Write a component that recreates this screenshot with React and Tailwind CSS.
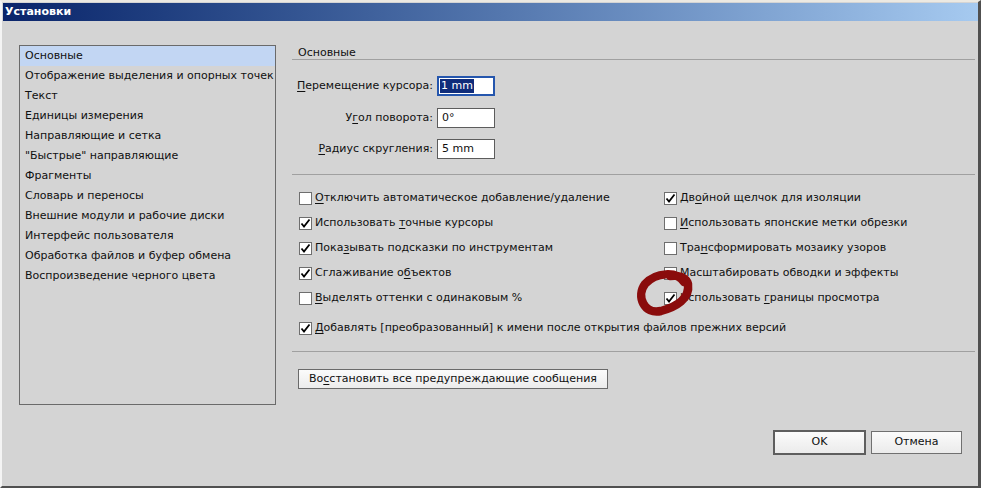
import React from "react";

const categories = [
  "Основные",
  "Отображение выделения и опорных точек",
  "Текст",
  "Единицы измерения",
  "Направляющие и сетка",
  "\"Быстрые\" направляющие",
  "Фрагменты",
  "Словарь и переносы",
  "Внешние модули и рабочие диски",
  "Интерфейс пользователя",
  "Обработка файлов и буфер обмена",
  "Воспроизведение черного цвета",
];

// label with one underlined mnemonic letter
function Mn({ text, at }) {
  return (
    <>
      {text.slice(0, at)}
      <span className="underline underline-offset-2">{text.slice(at, at + 1)}</span>
      {text.slice(at + 1)}
    </>
  );
}

function Check({ checked, text, at }) {
  return (
    <div className="h-[25px] flex items-center whitespace-nowrap">
      <span className="w-[13px] h-[13px] border border-[#6e6e6e] bg-white flex items-center justify-center shrink-0">
        {checked && (
          <svg width="11" height="11" viewBox="0 0 11 11">
            <path d="M1.5 5.5 L4 8.5 L9.5 1.5" fill="none" stroke="#000" strokeWidth="1.8" />
          </svg>
        )}
      </span>
      <span className="ml-[3px]">
        <Mn text={text} at={at} />
      </span>
    </div>
  );
}

function Field({ label, at, value, focused }) {
  return (
    <div className="flex items-center h-[20px]">
      <div className="w-[145px] pr-[4px] text-right whitespace-nowrap">
        <Mn text={label} at={at} />
      </div>
      {focused ? (
        <div className="w-[58px] h-[20px] border-[2px] border-[#2556ad] bg-white flex items-center pl-[1px]">
          <span className="bg-[#0f2c7a] text-white leading-[14px] px-[1px]">{value}</span>
        </div>
      ) : (
        <div className="w-[58px] h-[20px] border border-[#5c5c5c] bg-white flex items-center pl-[4px]">
          {value}
        </div>
      )}
    </div>
  );
}

export default function App() {
  return (
    <div className="relative w-[981px] h-[488px] bg-[#d4d4d4] border-t-[2px] border-t-[#ece9e2] border-l-[2px] border-l-[#f4f4f4] border-r-[3px] border-r-[#505050] border-b-[2px] border-b-[#505050] flex flex-col text-[11px] text-[#101010] font-['DejaVu_Sans',sans-serif] overflow-hidden">
      <div className="ml-[1px] mt-[1px] h-[18px] bg-linear-to-r from-[#0a246a] to-[#a6caf0] flex items-center pl-[2px]">
        <span className="text-white font-bold text-[11px]">Установки</span>
      </div>

      <div className="flex pt-[24px] pl-[17px]">
        <div className="w-[257px] h-[360px] border border-[#6a6a6a] shrink-0">
          {categories.map((c, i) => (
            <div
              key={c}
              className={
                "h-[20px] leading-[20px] pl-[5px] whitespace-nowrap " + (i === 0 ? "bg-[#c2d6f3]" : "")
              }
            >
              {c}
            </div>
          ))}
        </div>

        <div className="ml-[16px] flex-1 mr-[3px] flex flex-col">
          <div className="h-[15px] leading-[15px] pl-[6px] border-b border-b-[#a0a0a0]">Основные</div>

          <div className="mt-[16px]">
            <Field label="Перемещение курсора:" at={0} value="1 mm" focused />
          </div>
          <div className="mt-[12px]">
            <Field label="Угол поворота:" at={1} value="0°" />
          </div>
          <div className="mt-[11px]">
            <Field label="Радиус скругления:" at={0} value="5 mm" />
          </div>

          <div className="h-px bg-[#a0a0a0] mt-[15px]" />

          <div className="mt-[11px] pl-[7px] grid grid-cols-[365px_1fr]">
            <Check text="Отключить автоматическое добавление/удаление" at={0} />
            <Check checked text="Двойной щелчок для изоляции" at={2} />
            <Check checked text="Использовать точные курсоры" at={13} />
            <Check text="Использовать японские метки обрезки" at={0} />
            <Check checked text="Показывать подсказки по инструментам" at={4} />
            <Check text="Трансформировать мозаику узоров" at={3} />
            <Check checked text="Сглаживание объектов" at={13} />
            <Check text="Масштабировать обводки и эффекты" at={0} />
            <Check text="Выделять оттенки с одинаковым %" at={0} />
            <Check checked text="Использовать границы просмотра" at={13} />
          </div>
          <div className="mt-[5px] pl-[7px]">
            <Check checked text="Добавлять [преобразованный] к имени после открытия файлов прежних версий" at={0} />
          </div>

          <div className="h-px bg-[#a0a0a0] mt-[10px]" />

          <div className="mt-[17px] pl-[6px]">
            <button className="w-[310px] h-[20px] border border-[#6a6a6a] bg-linear-to-b from-[#fbfbfb] to-[#ececec] flex items-center justify-center whitespace-nowrap">
              <Mn text="Восстановить все предупреждающие сообщения" at={2} />
            </button>
          </div>

          <div className="mt-[41px] flex items-center justify-end gap-[5px] pr-[13px]">
            <button className="w-[93px] h-[25px] border-[2px] border-[#5e5e5e] bg-linear-to-b from-[#fbfbfb] to-[#ebebeb] flex items-center justify-center">
              OK
            </button>
            <button className="w-[91px] h-[23px] border border-[#707070] bg-linear-to-b from-[#fbfbfb] to-[#ebebeb] flex items-center justify-center">
              Отмена
            </button>
          </div>
        </div>
      </div>

      <svg className="absolute left-[630px] top-[264px] pointer-events-none" width="66" height="54" viewBox="0 0 66 54">
        <path
          d="M52 16 C45 5, 24 6, 13 18 C4 30, 12 49, 29 45 C44 41, 58 33, 56 18 C54 11, 46 9, 38 10"
          fill="none"
          stroke="#8a0c0c"
          strokeWidth="8.5"
          strokeLinecap="round"
        />
      </svg>
    </div>
  );
}
